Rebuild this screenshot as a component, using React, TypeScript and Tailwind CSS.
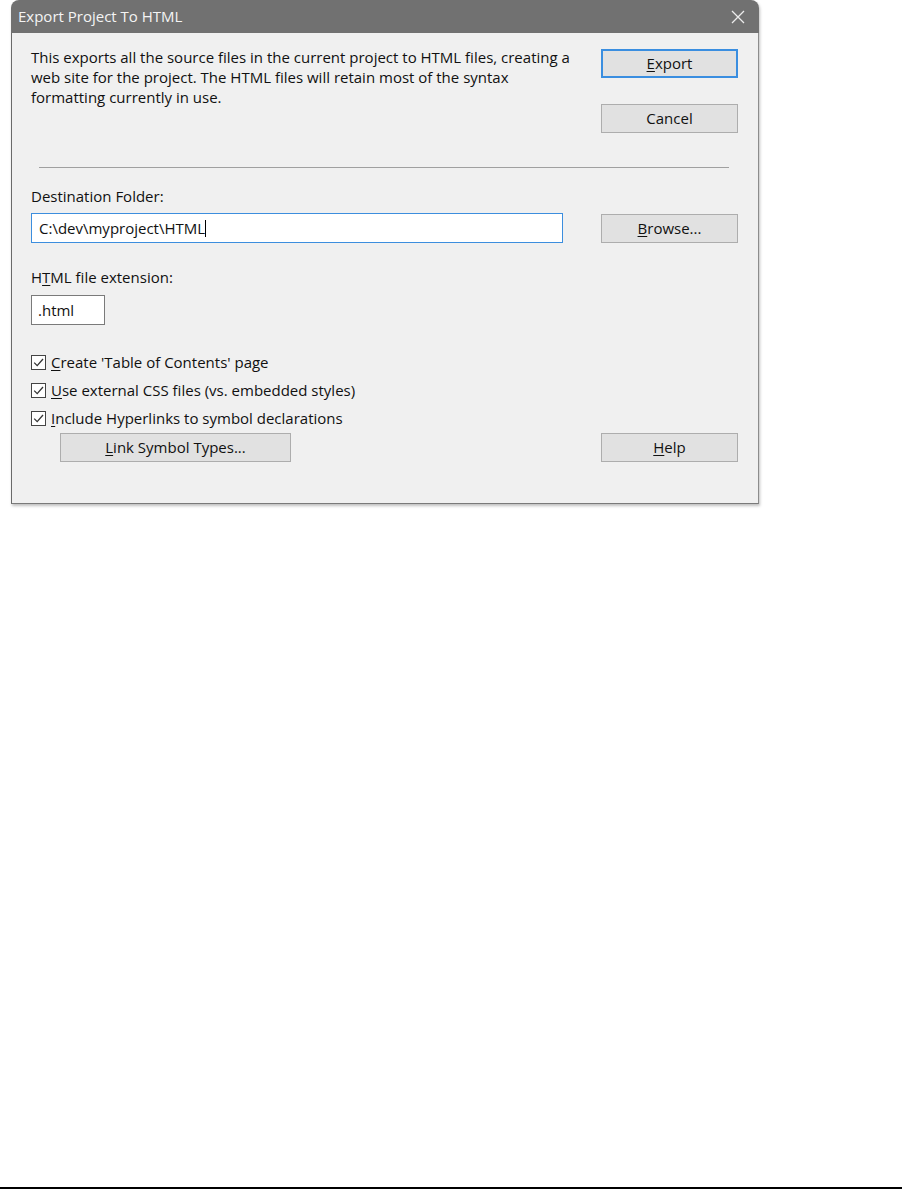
import React from 'react';

const FONT = { fontFamily: '"Open Sans", "Noto Sans", sans-serif' };

// underlined mnemonic letter
const U: React.FC<{ children: React.ReactNode }> = ({ children }) => (
    <span className="underline underline-offset-[2px]">{children}</span>
);

const Button: React.FC<{ className?: string; primary?: boolean; children: React.ReactNode }> = ({ className = '', primary, children }) => (
    <div className={`h-[29px] flex items-center justify-center text-[15px] text-[#111] bg-[#e1e1e1] ${primary
        ? 'border-2 border-[#3a8ee0]'
        : 'border border-[#adadad]'} ${className}`}>
        <span>{children}</span>
    </div>
);

const Check: React.FC<{ children: React.ReactNode }> = ({ children }) => (
    <div className="h-[28px] flex items-center">
        <div className="w-[15px] h-[15px] border border-[#444] bg-white flex items-center justify-center">
            <svg width="13" height="13" viewBox="0 0 13 13" fill="none">
                <path d="M2.2 6.6 L5.2 9.6 L11 3" stroke="#333" strokeWidth="1.3" />
            </svg>
        </div>
        <span className="ml-[5px] text-[15px] text-[#111]">{children}</span>
    </div>
);

export default function App() {
    return (
        <div className="min-h-[1191px] flex flex-col bg-white" style={FONT}>
            {/* Dialog */}
            <div className="ml-[11px] w-[748px] rounded-t-[8px] overflow-hidden shadow-[1px_2px_3px_rgba(0,0,0,0.25)]">
                {/* Title bar */}
                <div className="h-[33px] bg-[#717171] flex items-center justify-between pl-[7px] pr-[14px]">
                    <span className="text-[15px] text-[#f4f4f4]">Export Project To HTML</span>
                    <svg width="14" height="14" viewBox="0 0 14 14">
                        <path d="M1 1 L13 13 M13 1 L1 13" stroke="#ececec" strokeWidth="1.3" />
                    </svg>
                </div>

                {/* Body */}
                <div className="bg-[#f0f0f0] border-l border-r border-b border-l-[#6a6a6a] border-r-[#8c8c8c] border-b-[#7a7a7a] pl-[19px] pr-[20px] pt-[16px] pb-[41px] text-[#111]">
                    <div className="flex justify-between">
                        <p className="text-[15px] leading-[20px] -mt-[2px]">
                            This exports all the source files in the current project to HTML files, creating a<br />
                            web site for the project. The HTML files will retain most of the syntax<br />
                            formatting currently in use.
                        </p>
                        <div className="w-[137px] flex flex-col">
                            <Button primary><U>E</U>xport</Button>
                            <Button className="mt-[26px]">Cancel</Button>
                        </div>
                    </div>

                    <div className="mt-[34px] ml-[8px] mr-[9px] h-[1px] bg-[#a0a0a0]" />

                    <div className="mt-[18px] text-[15px] leading-[20px]">Destination Folder:</div>
                    <div className="mt-[7px] flex items-center justify-between">
                        <div className="w-[532px] h-[30px] bg-white border border-[#3c8ede] flex items-center pl-[7px] text-[15px]">
                            <span>C:\dev\myproject\HTML</span>
                            <span className="w-[1px] h-[17px] bg-black" />
                        </div>
                        <Button className="w-[137px]"><U>B</U>rowse...</Button>
                    </div>

                    <div className="mt-[24px] text-[15px] leading-[20px]">H<U>T</U>ML file extension:</div>
                    <div className="mt-[8px] w-[74px] h-[30px] bg-white border border-[#7a7a7a] flex items-center pl-[6px] text-[15px]">
                        .html
                    </div>

                    <div className="mt-[23px] flex flex-col">
                        <Check><U>C</U>reate 'Table of Contents' page</Check>
                        <Check><U>U</U>se external CSS files (vs. embedded styles)</Check>
                        <Check><U>I</U>nclude Hyperlinks to symbol declarations</Check>
                    </div>

                    <div className="mt-[1px] flex justify-between">
                        <Button className="ml-[29px] w-[231px]"><U>L</U>ink Symbol Types...</Button>
                        <Button className="w-[137px]"><U>H</U>elp</Button>
                    </div>
                </div>
            </div>

            <div className="flex-1" />
            <div className="h-[2px] bg-black mb-[2px]" />
        </div>
    );
}
